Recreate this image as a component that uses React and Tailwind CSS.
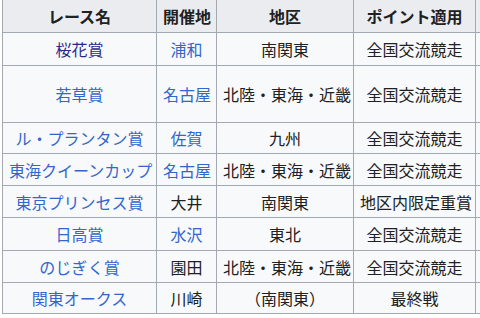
import React from "react";

const rows = [
  { race: "桜花賞", visited: true, place: "浦和", placeLink: true, area: "南関東", point: "全国交流競走", h: "h-[33px]" },
  { race: "若草賞", place: "名古屋", placeLink: true, area: "北陸・東海・近畿", point: "全国交流競走", h: "h-[57px]" },
  { race: "ル・プランタン賞", place: "佐賀", placeLink: true, area: "九州", point: "全国交流競走", h: "h-[31px]" },
  { race: "東海クイーンカップ", place: "名古屋", placeLink: true, area: "北陸・東海・近畿", point: "全国交流競走", h: "h-[32px]" },
  { race: "東京プリンセス賞", place: "大井", area: "南関東", point: "地区内限定重賞", h: "h-[32px]" },
  { race: "日高賞", place: "水沢", placeLink: true, area: "東北", point: "全国交流競走", h: "h-[33px]" },
  { race: "のじぎく賞", place: "園田", area: "北陸・東海・近畿", point: "全国交流競走", h: "h-[32px]" },
  { race: "関東オークス", place: "川崎", area: "（南関東）", point: "最終戦", h: "h-[31px]" },
];

const cell = "border border-[#a2a9b1] px-[6px] text-center whitespace-nowrap";

export default function App() {
  return (
    <div className="w-[480px] h-[318px] overflow-hidden bg-white font-['Noto_Sans_CJK_JP',sans-serif] text-[16px] text-[#202122]">
      <table className="border-collapse table-fixed bg-[#f8f9fa] mt-[-1px] ml-[2px] w-[560px]">
        <colgroup>
          <col className="w-[154px]" />
          <col className="w-[60px]" />
          <col className="w-[137px]" />
          <col className="w-[122px]" />
          <col className="w-[87px]" />
        </colgroup>
        <thead>
          <tr className="h-[33px] bg-[#eaecf0]">
            <th className={`${cell} font-bold`}>レース名</th>
            <th className={`${cell} font-bold`}>開催地</th>
            <th className={`${cell} font-bold`}>地区</th>
            <th className={`${cell} font-bold`}>ポイント適用</th>
            <th className={cell}></th>
          </tr>
        </thead>
        <tbody>
          {rows.map((r) => (
            <tr key={r.race} className={r.h}>
              <td className={cell}>
                <span className={r.visited ? "text-[#2a2a8c]" : "text-[#3366cc]"}>{r.race}</span>
              </td>
              <td className={cell}>
                <span className={r.placeLink ? "text-[#3366cc]" : ""}>{r.place}</span>
              </td>
              <td className={cell}>{r.area}</td>
              <td className={cell}>{r.point}</td>
              <td className={cell}></td>
            </tr>
          ))}
        </tbody>
      </table>
    </div>
  );
}
